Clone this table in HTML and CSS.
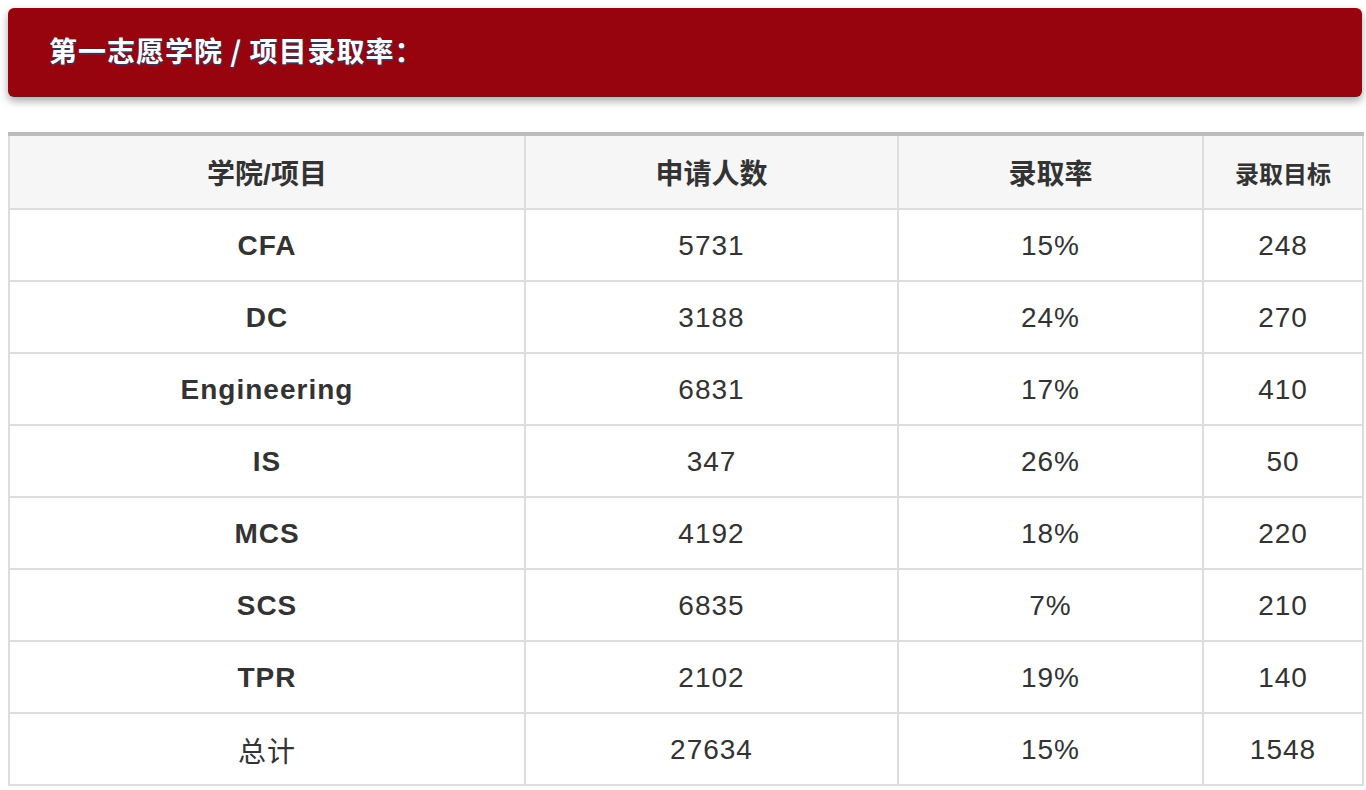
FILE: index.html
```html
<!DOCTYPE html>
<html lang="zh">
<head>
<meta charset="utf-8">
<title>第一志愿学院 / 项目录取率</title>
<link rel="stylesheet" href="styles.css">
</head>
<body>
<div class="banner"><h2 class="banner-title">第一志愿学院 / 项目录取率：</h2></div>
<table class="rates">
  <colgroup>
    <col class="c1"><col class="c2"><col class="c3"><col class="c4">
  </colgroup>
  <thead>
    <tr><th>学院/项目</th><th>申请人数</th><th>录取率</th><th class="small">录取目标</th></tr>
  </thead>
  <tbody>
    <tr><td class="name">CFA</td><td>5731</td><td>15%</td><td>248</td></tr>
    <tr><td class="name">DC</td><td>3188</td><td>24%</td><td>270</td></tr>
    <tr><td class="name">Engineering</td><td>6831</td><td>17%</td><td>410</td></tr>
    <tr><td class="name">IS</td><td>347</td><td>26%</td><td>50</td></tr>
    <tr><td class="name">MCS</td><td>4192</td><td>18%</td><td>220</td></tr>
    <tr><td class="name">SCS</td><td>6835</td><td>7%</td><td>210</td></tr>
    <tr><td class="name">TPR</td><td>2102</td><td>19%</td><td>140</td></tr>
    <tr><td>总计</td><td>27634</td><td>15%</td><td>1548</td></tr>
  </tbody>
</table>
</body>
</html>
```
FILE: styles.css
```css
html, body {
  margin: 0;
  padding: 0;
  background: #ffffff;
}
body {
  padding: 8px 4px 0 8px;
  font-family: "Liberation Sans", "Noto Sans CJK SC", sans-serif;
  color: #333333;
}
.banner {
  background: #98040e;
  border-radius: 6px;
  height: 89px;
  box-sizing: border-box;
  display: flex;
  align-items: center;
  padding-left: 41px;
  padding-bottom: 5px;
  box-shadow: 0 4px 8px rgba(0, 0, 0, 0.35);
}
.banner-title {
  margin: 0;
  font-size: 28px;
  font-weight: bold;
  color: #ffffff;
  letter-spacing: 1px;
  text-shadow: 1px 2px 1px rgba(40, 62, 95, 0.95);
  font-family: "Noto Sans CJK SC", "Liberation Sans", sans-serif;
}
.rates {
  margin-top: 35px;
  width: 1354px;
  border-collapse: collapse;
  table-layout: fixed;
  border-top: 4px solid #bdbdbd;
}
.c1 { width: 516px; }
.c2 { width: 373px; }
.c3 { width: 305px; }
.c4 { width: 160px; }
.rates th,
.rates td {
  border: 2px solid #dddddd;
  text-align: center;
  vertical-align: middle;
  padding: 0;
  font-size: 28px;
  font-family: "Liberation Sans", "Noto Sans CJK SC", sans-serif;
}
.rates th {
  background: #f6f6f6;
  height: 72px;
  font-weight: bold;
  border-top: 4px solid #bdbdbd;
}
.rates th.small {
  font-size: 24px;
}
.rates td {
  height: 68px;
  letter-spacing: 1px;
  padding-top: 2px;
}
.rates td.name {
  font-weight: bold;
}
```
